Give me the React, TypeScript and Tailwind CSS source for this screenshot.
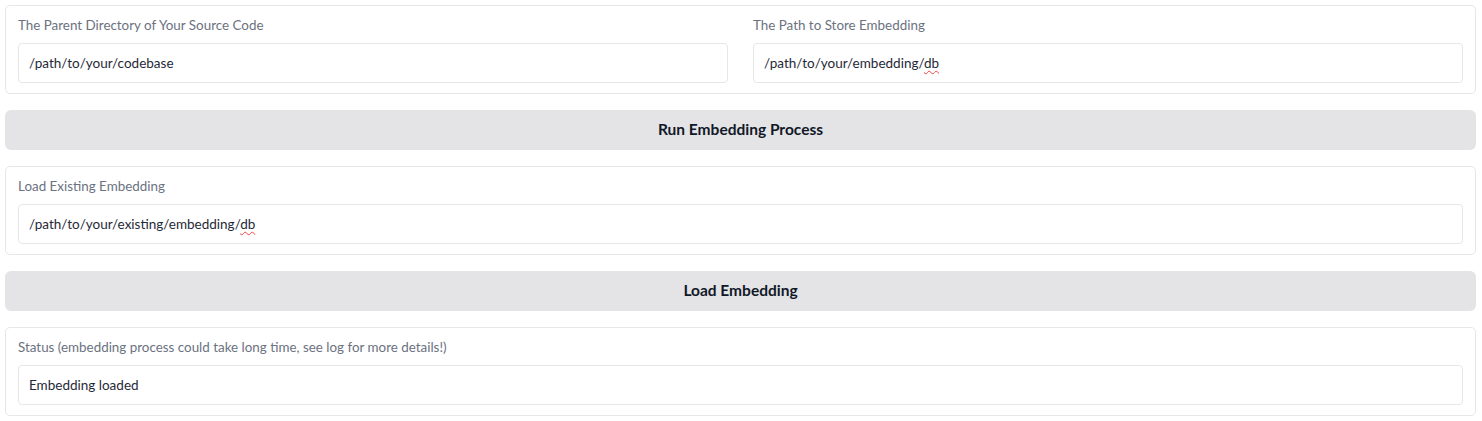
import React from 'react';

const FONT = { fontFamily: 'Lato, "Noto Sans", sans-serif' };

interface FieldProps {
  label: string;
  value: React.ReactNode;
}

const Field: React.FC<FieldProps> = ({ label, value }) => (
  <div className="flex-1 min-w-0">
    <div className="text-[13.4px] leading-5 text-[#6b7280]">{label}</div>
    <div className="mt-2 h-10 rounded-[4px] border border-[#e5e7eb] bg-white px-[10px] flex items-center text-[13.5px] text-[#1f2937]">
      {value}
    </div>
  </div>
);

const Squiggle: React.FC<{ children: React.ReactNode }> = ({ children }) => (
  <span className="underline decoration-wavy decoration-[#ef4444] decoration-1 underline-offset-2">{children}</span>
);

const Block: React.FC<{ children: React.ReactNode }> = ({ children }) => (
  <div className="rounded-[5px] border border-[#e5e7eb] bg-white px-3 pt-[9px] pb-[10px] flex gap-[25px]">
    {children}
  </div>
);

const Button: React.FC<{ label: string }> = ({ label }) => (
  <button className="h-10 w-full rounded-[6px] bg-[#e4e4e7] text-[15.5px] font-bold text-[#111827]">
    {label}
  </button>
);

export default function App() {
  return (
    <div className="min-h-screen bg-white pl-[5px] pr-[6px] pt-[5px] flex flex-col gap-4" style={FONT}>
      <Block>
        <Field label="The Parent Directory of Your Source Code" value="/path/to/your/codebase" />
        <Field
          label="The Path to Store Embedding"
          value={<span>/path/to/your/embedding/<Squiggle>db</Squiggle></span>}
        />
      </Block>
      <Button label="Run Embedding Process" />
      <Block>
        <Field
          label="Load Existing Embedding"
          value={<span>/path/to/your/existing/embedding/<Squiggle>db</Squiggle></span>}
        />
      </Block>
      <Button label="Load Embedding" />
      <Block>
        <Field
          label="Status (embedding process could take long time, see log for more details!)"
          value="Embedding loaded"
        />
      </Block>
    </div>
  );
}
